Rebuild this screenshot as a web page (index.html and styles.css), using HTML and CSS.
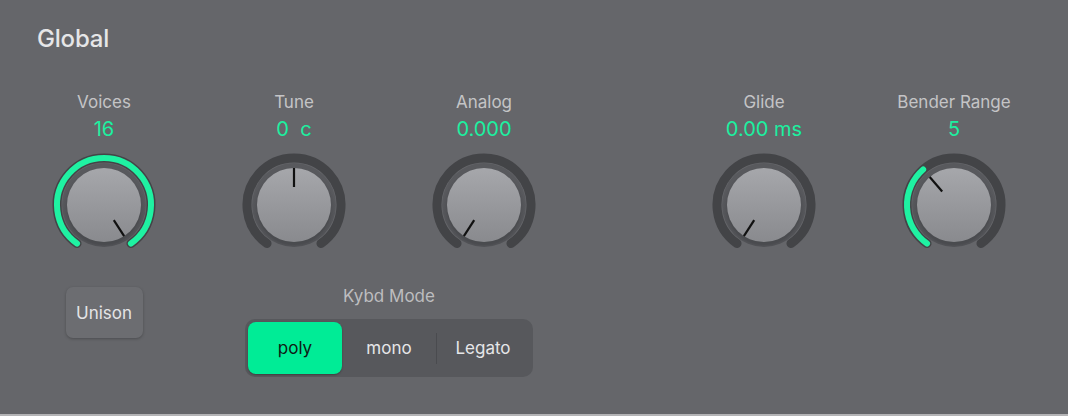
FILE: index.html
```html
<!DOCTYPE html>
<html>
<head>
<meta charset="utf-8">
<link rel="stylesheet" href="styles.css">
</head>
<body>
<div class="panel">
  <h1 class="title">Global</h1>
  <div class="knobs">
    <div class="col">
      <div class="label">Voices</div>
      <div class="value">16</div>
      <svg class="knob" viewBox="0 0 110 110" width="110" height="110">
        <defs>
          <linearGradient id="body" x1="0" y1="0" x2="0" y2="1">
            <stop offset="0" stop-color="#a6a7ab"/>
            <stop offset="1" stop-color="#898a8e"/>
          </linearGradient>
          <radialGradient id="bevel" cx="0.5" cy="0.55" r="0.5">
            <stop offset="0.8" stop-color="#4a4b4f"/>
            <stop offset="1" stop-color="#58595d"/>
          </radialGradient>
        </defs>
        <path class="track" d="M28.04 93.5 A47 47 0 1 1 81.96 93.5"/>
        <path class="arc" d="M28.04 93.5 A47 47 0 1 1 81.96 93.5"/>
        <circle cx="55" cy="55" r="42" fill="url(#bevel)"/>
        <circle cx="55" cy="58" r="37" fill="#4a4b4f" opacity="0.6"/>
        <circle cx="55" cy="55" r="37" fill="url(#body)"/>
        <line class="ptr" x1="55" y1="18" x2="55" y2="37" transform="rotate(147 55 55)"/>
      </svg>
      <button class="unison">Unison</button>
    </div>
    <div class="col">
      <div class="label">Tune</div>
      <div class="value">0&nbsp;&nbsp;c</div>
      <svg class="knob" viewBox="0 0 110 110" width="110" height="110">
        <path class="track" d="M28.04 93.5 A47 47 0 1 1 81.96 93.5"/>
        <circle cx="55" cy="55" r="42" fill="url(#bevel)"/>
        <circle cx="55" cy="58" r="37" fill="#4a4b4f" opacity="0.6"/>
        <circle cx="55" cy="55" r="37" fill="url(#body)"/>
        <line class="ptr" x1="55" y1="18" x2="55" y2="37"/>
      </svg>
    </div>
    <div class="col">
      <div class="label">Analog</div>
      <div class="value">0.000</div>
      <svg class="knob" viewBox="0 0 110 110" width="110" height="110">
        <path class="track" d="M28.04 93.5 A47 47 0 1 1 81.96 93.5"/>
        <circle cx="55" cy="55" r="42" fill="url(#bevel)"/>
        <circle cx="55" cy="58" r="37" fill="#4a4b4f" opacity="0.6"/>
        <circle cx="55" cy="55" r="37" fill="url(#body)"/>
        <line class="ptr" x1="55" y1="18" x2="55" y2="37" transform="rotate(-147 55 55)"/>
      </svg>
    </div>
    <div class="col gap-left">
      <div class="label">Glide</div>
      <div class="value">0.00 ms</div>
      <svg class="knob" viewBox="0 0 110 110" width="110" height="110">
        <path class="track" d="M28.04 93.5 A47 47 0 1 1 81.96 93.5"/>
        <circle cx="55" cy="55" r="42" fill="url(#bevel)"/>
        <circle cx="55" cy="58" r="37" fill="#4a4b4f" opacity="0.6"/>
        <circle cx="55" cy="55" r="37" fill="url(#body)"/>
        <line class="ptr" x1="55" y1="18" x2="55" y2="37" transform="rotate(-147 55 55)"/>
      </svg>
    </div>
    <div class="col">
      <div class="label">Bender Range</div>
      <div class="value">5</div>
      <svg class="knob" viewBox="0 0 110 110" width="110" height="110">
        <path class="track" d="M28.04 93.5 A47 47 0 1 1 81.96 93.5"/>
        <path class="arc" d="M28.04 93.5 A47 47 0 0 1 24.16 19.53"/>
        <circle cx="55" cy="55" r="42" fill="url(#bevel)"/>
        <circle cx="55" cy="58" r="37" fill="#4a4b4f" opacity="0.6"/>
        <circle cx="55" cy="55" r="37" fill="url(#body)"/>
        <line class="ptr" x1="55" y1="18" x2="55" y2="37" transform="rotate(-41 55 55)"/>
      </svg>
    </div>
  </div>
  <div class="kybd">
    <div class="kybd-label">Kybd Mode</div>
    <div class="seg">
      <div class="seg-btn on">poly</div>
      <div class="seg-btn">mono</div>
      <div class="seg-div"></div>
      <div class="seg-btn">Legato</div>
    </div>
  </div>
</div>
</body>
</html>
```

FILE: styles.css
```css
html, body {
  margin: 0;
  padding: 0;
}
body {
  width: 1068px;
  height: 416px;
  background: #b4b4b6;
  font-family: Inter, "Noto Sans", "Liberation Sans", sans-serif;
  overflow: hidden;
}
.panel {
  height: 414px;
  background: #65666a;
  position: relative;
}
.title {
  margin: 0;
  padding: 25px 0 0 37px;
  font-size: 24px;
  font-weight: 500;
  color: #e6e6e8;
  line-height: 28px;
  letter-spacing: -0.2px;
}
.knobs {
  display: flex;
  gap: 70px;
  padding-left: 44px;
  margin-top: 39px;
}
.col {
  width: 120px;
  display: flex;
  flex-direction: column;
  align-items: center;
}
.gap-left {
  margin-left: 90px;
}
.label {
  font-size: 17px;
  line-height: 20px;
  color: #c4c4c6;
}
.value {
  font-size: 20px;
  line-height: 24px;
  margin-top: 5px;
  color: #1cf0a0;
  white-space: pre;
}
.knob {
  display: block;
  margin-top: 9px;
}
.track {
  fill: none;
  stroke: #434447;
  stroke-width: 9;
  stroke-linecap: round;
}
.arc {
  fill: none;
  stroke: #1ff2a2;
  stroke-width: 6;
  stroke-linecap: round;
}
.ptr {
  stroke: #111;
  stroke-width: 2.2;
}
.unison {
  margin-top: 27px;
  width: 77px;
  height: 51px;
  border: none;
  border-radius: 7px;
  background: #6c6d71;
  box-shadow: 0 1px 3px rgba(0,0,0,0.25);
  color: #e4e4e6;
  font-family: inherit;
  font-size: 17px;
  padding: 0;
}
.kybd {
  position: absolute;
  left: 245px;
  top: 285px;
  width: 288px;
  display: flex;
  flex-direction: column;
  align-items: center;
}
.kybd-label {
  font-size: 17px;
  line-height: 22px;
  color: #bdbdbf;
}
.seg {
  margin-top: 12px;
  width: 288px;
  height: 58px;
  box-sizing: border-box;
  padding: 3px;
  border-radius: 10px;
  background: #57585c;
  display: flex;
  align-items: center;
}
.seg-btn {
  width: 94px;
  height: 52px;
  display: flex;
  align-items: center;
  justify-content: center;
  font-size: 17px;
  color: #e6e6e8;
  border-radius: 8px;
}
.seg-btn.on {
  background: #00ec96;
  color: #0f1a14;
  box-shadow: 0 1px 2px rgba(0,0,0,0.3);
}
.seg-div {
  width: 1px;
  height: 31px;
  background: #4a4b4f;
  margin: 0 -1px 0 0;
}
```
